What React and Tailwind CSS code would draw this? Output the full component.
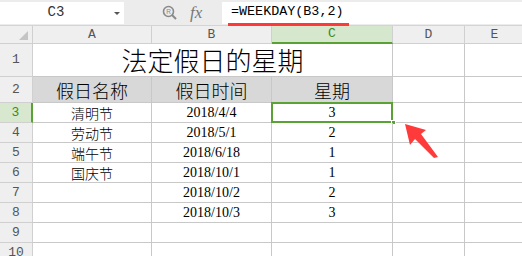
import React from "react";

const cols = ["A", "B", "C", "D", "E"];
const data = [
  ["清明节", "2018/4/4", "3"],
  ["劳动节", "2018/5/1", "2"],
  ["端午节", "2018/6/18", "1"],
  ["国庆节", "2018/10/1", "1"],
  ["", "2018/10/2", "2"],
  ["", "2018/10/3", "3"],
  ["", "", ""],
  ["", "", ""],
];

const line = "border-r border-b border-[#c8c8c8]";
const rowHead =
  "flex items-center justify-center bg-[#efefef] border-r border-b border-[#d0d0d0] text-[13px] text-[#555] font-['Liberation_Mono',monospace]";

export default function App() {
  return (
    <div className="relative w-[522px] h-[256px] overflow-hidden bg-white">
      {/* toolbar */}
      <div className="flex h-[26px] items-center bg-[#ececec] border-b border-[#d4d4d4]">
        <div className="relative flex h-[22px] w-[124px] items-center justify-center bg-white text-[14px] text-[#333] font-['Liberation_Mono',monospace]">
          <span className="-ml-3">C3</span>
          <div className="absolute right-[4px] top-[10px] h-0 w-0 border-x-[3px] border-t-[3px] border-x-transparent border-t-[#555]" />
        </div>
        <div className="flex w-[98px] items-center pl-[38px] gap-[12px]">
          <svg width="16" height="16" viewBox="0 0 16 16">
            <circle cx="6.5" cy="6.5" r="5" fill="none" stroke="#8a8a8a" strokeWidth="1.6" />
            <line x1="10" y1="10" x2="14" y2="14" stroke="#8a8a8a" strokeWidth="2" />
            <text x="4.3" y="9" fontSize="6.5" fill="#8a8a8a" fontFamily="Liberation Sans, sans-serif">R</text>
          </svg>
          <span className="text-[17px] italic text-[#777] font-['Liberation_Serif',serif] leading-none">fx</span>
        </div>
        <div className="relative flex h-[22px] flex-1 items-center bg-white pl-[9px] text-[13.4px] text-black font-['Liberation_Mono',monospace]">
          =WEEKDAY(B3,2)
          <div className="absolute left-[6px] top-[21px] h-[3px] w-[121px] bg-[#ff3838]" />
        </div>
      </div>

      {/* grid */}
      <div className="grid grid-cols-[33px_119px_120px_121px_72px_60px] grid-rows-[18px_33px_26px_20px_20px_20px_20px_20px_20px_20px_20px_20px]">
        {/* corner */}
        <div className="relative bg-[#efefef] border-r border-b border-[#d0d0d0]">
          <svg className="absolute right-[4px] bottom-[3px]" width="9" height="9" viewBox="0 0 9 9">
            <polygon points="9,0 9,9 0,9" fill="#c4c4c4" />
          </svg>
        </div>
        {cols.map((c) =>
          c === "C" ? (
            <div
              key={c}
              className="flex items-center justify-center bg-[#d5e7cc] border-b-2 border-b-[#5ba234] border-r border-r-[#d0d0d0] text-[13px] text-[#3b8a1e] font-['Liberation_Mono',monospace]"
            >
              {c}
            </div>
          ) : (
            <div
              key={c}
              className="flex items-center justify-center bg-[#efefef] border-r border-b border-[#d0d0d0] text-[13px] text-[#555] font-['Liberation_Mono',monospace]"
            >
              {c}
            </div>
          )
        )}

        {/* row 1 */}
        <div className={rowHead}>1</div>
        <div className={`col-span-3 flex items-center justify-center ${line} text-[26px] font-light text-black font-['Noto_Sans_CJK_SC',sans-serif] leading-none`}>
          法定假日的星期
        </div>
        <div className={line} />
        <div className={line} />

        {/* row 2 */}
        <div className={rowHead}>2</div>
        {["假日名称", "假日时间", "星期"].map((t) => (
          <div
            key={t}
            className={`flex items-center justify-center bg-[#d8d8d8] ${line} text-[18px] font-light text-black font-['Noto_Sans_CJK_SC',sans-serif] leading-none`}
          >
            {t}
          </div>
        ))}
        <div className={line} />
        <div className={line} />

        {data.map((r, i) => {
          const n = i + 3;
          const sel = n === 3;
          return (
            <React.Fragment key={n}>
              {sel ? (
                <div className="flex items-center justify-center bg-[#d7e8cf] border-r-2 border-r-[#5ba234] border-b border-b-[#d0d0d0] text-[13px] text-[#3b8a1e] font-['Liberation_Mono',monospace]">
                  {n}
                </div>
              ) : (
                <div className={rowHead}>{n}</div>
              )}
              <div className={`flex items-center justify-center ${line} text-[14px] font-light text-black font-['Noto_Sans_CJK_SC',sans-serif] leading-none`}>
                {r[0]}
              </div>
              <div className={`flex items-center justify-center ${line} text-[14px] text-black font-['Liberation_Serif',serif] leading-none`}>
                {r[1]}
              </div>
              <div className={`relative flex items-center justify-center ${line} text-[14px] text-black font-['Liberation_Serif',serif] leading-none`}>
                {sel && (
                  <div className="absolute -left-[1px] -top-[1px] h-[21px] w-[122px] border-2 border-[#5ba234]" />
                )}
                {sel && (
                  <div className="absolute right-[-4px] bottom-[-3px] h-[5px] w-[5px] bg-[#5ba234] border border-white" />
                )}
                {r[2]}
              </div>
              <div className={line} />
              <div className={line} />
            </React.Fragment>
          );
        })}
      </div>

      {/* red arrow */}
      <svg className="absolute left-[403px] top-[122px]" width="40" height="40" viewBox="0 0 40 40">
        <polygon points="2,2 23,8 18,12 35,35 31,36 12,17 7,23" fill="#ff3a3a" />
      </svg>
    </div>
  );
}
